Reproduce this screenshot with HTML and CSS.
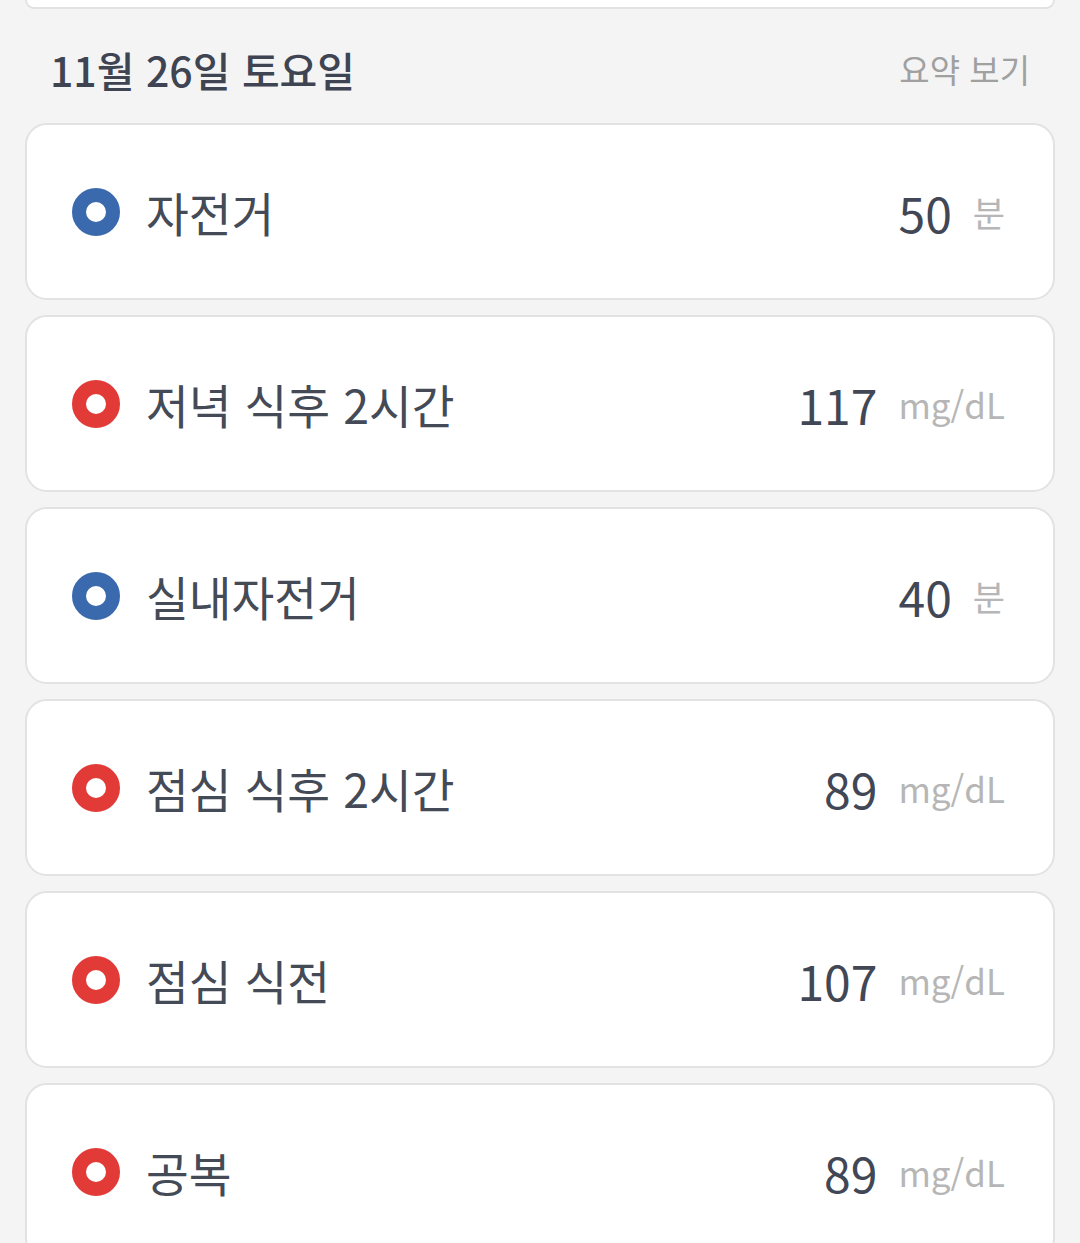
FILE: index.html
```html
<!DOCTYPE html>
<html lang="ko">
<head>
<meta charset="utf-8">
<link rel="stylesheet" href="styles.css">
</head>
<body>
<div class="page">
  <div class="prev-card"></div>
  <div class="day-header">
    <span class="day-title">11월 26일 토요일</span>
    <span class="day-link">요약 보기</span>
  </div>
  <div class="list">
    <div class="card">
      <span class="dot dot-blue"></span>
      <span class="label">자전거</span>
      <span class="value">50</span><span class="unit">분</span>
    </div>
    <div class="card">
      <span class="dot dot-red"></span>
      <span class="label">저녁 식후 2시간</span>
      <span class="value">117</span><span class="unit">mg/dL</span>
    </div>
    <div class="card">
      <span class="dot dot-blue"></span>
      <span class="label">실내자전거</span>
      <span class="value">40</span><span class="unit">분</span>
    </div>
    <div class="card">
      <span class="dot dot-red"></span>
      <span class="label">점심 식후 2시간</span>
      <span class="value">89</span><span class="unit">mg/dL</span>
    </div>
    <div class="card">
      <span class="dot dot-red"></span>
      <span class="label">점심 식전</span>
      <span class="value">107</span><span class="unit">mg/dL</span>
    </div>
    <div class="card">
      <span class="dot dot-red"></span>
      <span class="label">공복</span>
      <span class="value">89</span><span class="unit">mg/dL</span>
    </div>
  </div>
</div>
</body>
</html>
```

FILE: styles.css
```css
html, body {
  margin: 0;
  padding: 0;
  background: #f4f4f4;
}
body {
  font-family: "Noto Sans CJK KR", "Noto Sans", sans-serif;
  color: #414755;
  height: 1243px;
  overflow: hidden;
}
.page {
  padding: 0 25px;
}
.prev-card {
  height: 7px;
  background: #fff;
  border: 2px solid #e2e2e2;
  border-top: none;
  border-radius: 0 0 22px 22px;
}
.day-header {
  height: 114px;
  display: flex;
  align-items: center;
  justify-content: space-between;
  padding: 6px 25px 0 25px;
  box-sizing: border-box;
}
.day-title {
  font-size: 41px;
  font-weight: 500;
  color: #3f4452;
}
.day-link {
  font-size: 33px;
  color: #a0a0a0;
}
.list {
  display: flex;
  flex-direction: column;
  gap: 15px;
}
.card {
  height: 177px;
  box-sizing: border-box;
  background: #fff;
  border: 2px solid #e2e2e2;
  border-radius: 22px;
  display: flex;
  align-items: center;
  padding: 0 48px 0 45px;
}
.dot {
  width: 48px;
  height: 48px;
  border-radius: 50%;
  box-sizing: border-box;
  border: 14px solid;
  background: #fff;
  flex-shrink: 0;
  margin-right: 26px;
}
.dot-blue { border-color: #3b69ad; }
.dot-red { border-color: #e23a36; }
.label {
  font-size: 46.5px;
  color: #444a56;
  flex: 1;
}
.value {
  font-size: 48px;
  color: #414755;
}
.unit {
  font-size: 35px;
  color: #b6b6b6;
  margin-left: 21px;
}
```
